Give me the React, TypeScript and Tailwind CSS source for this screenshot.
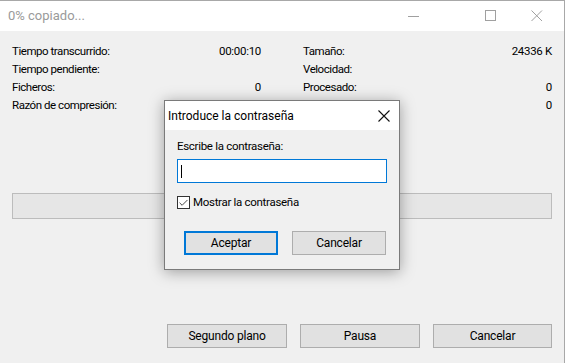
import { Check } from "lucide-react";

const font = { fontFamily: "Roboto, 'Liberation Sans', sans-serif" };

function StatRow({ label, value }: { label: string; value?: string }) {
  return (
    <div className="flex h-[18px] items-center justify-between">
      <span className="tracking-[-0.45px]">{label}</span>
      <span className="tracking-[-0.3px]">{value}</span>
    </div>
  );
}

function WinButton({ label, w = "w-[120px]", focus = false }: { label: string; w?: string; focus?: boolean }) {
  return (
    <button
      className={
        "flex h-[24px] items-center justify-center bg-[#e1e1e1] text-[12px] tracking-[-0.2px] text-black " +
        w +
        (focus ? " border-2 border-[#0078d7]" : " border border-[#adadad]")
      }
    >
      {label}
    </button>
  );
}

export default function App() {
  return (
    <div className="relative h-[363px] w-[567px] overflow-hidden bg-white" style={font}>
      {/* main copy window */}
      <div className="flex h-full w-[565px] flex-col border-r border-t border-[#a8a8a8] bg-[#f0f0f0]">
        <div className="flex h-[30px] items-center justify-between bg-white">
          <span className="pl-[8px] text-[13px] text-[#9a9a9a]">0% copiado...</span>
          <div className="flex h-full items-center pr-[4px]">
            <div className="mr-[31px] flex h-full w-[46px] items-center justify-center">
              <svg width="12" height="12" viewBox="0 0 12 12">
                <line x1="0" y1="6.5" x2="11" y2="6.5" stroke="#a0a0a0" strokeWidth="1" />
              </svg>
            </div>
            <div className="flex h-full w-[46px] items-center justify-center">
              <svg width="12" height="12" viewBox="0 0 12 12">
                <rect x="0.5" y="0.5" width="10" height="10" fill="none" stroke="#a0a0a0" strokeWidth="1" />
              </svg>
            </div>
            <div className="flex h-full w-[46px] items-center justify-center">
              <svg width="12" height="12" viewBox="0 0 12 12">
                <path d="M0.5 0.5 L11 11 M11 0.5 L0.5 11" stroke="#a0a0a0" strokeWidth="1" />
              </svg>
            </div>
          </div>
        </div>

        <div className="flex flex-1 flex-col px-[12px] pt-[12px] text-[11.5px] text-black">
          <div className="grid grid-cols-2 gap-x-[42px]">
            <div className="flex flex-col">
              <StatRow label="Tiempo transcurrido:" value="00:00:10" />
              <StatRow label="Tiempo pendiente:" />
              <StatRow label="Ficheros:" value="0" />
              <StatRow label="Razón de compresión:" />
            </div>
            <div className="flex flex-col">
              <StatRow label="Tamaño:" value="24336 K" />
              <StatRow label="Velocidad:" />
              <StatRow label="Procesado:" value="0" />
              <StatRow label="Errores:" value="0" />
            </div>
          </div>

          <div className="mt-[78px] h-[26px] w-full border border-[#bcbcbc] bg-[#e6e6e6]" />

          <div className="mt-[105px] flex justify-end gap-[13px]">
            <WinButton label="Segundo plano" />
            <WinButton label="Pausa" />
            <WinButton label="Cancelar" w="w-[119px]" />
          </div>
        </div>
      </div>

      {/* password dialog */}
      <div className="absolute left-[164px] top-[100px] flex h-[170px] w-[236px] flex-col border border-[#7a7a7a] bg-[#f0f0f0] shadow-[0_2px_14px_rgba(0,0,0,0.35)]">
        <div className="flex h-[29px] items-center justify-between bg-white pl-[3px] pr-[9px]">
          <span className="text-[12px] text-black">Introduce la contraseña</span>
          <svg width="12" height="12" viewBox="0 0 12 12">
            <path d="M0.5 0.5 L11.5 11.5 M11.5 0.5 L0.5 11.5" stroke="#111" strokeWidth="1.1" />
          </svg>
        </div>
        <div className="flex flex-col px-[12px] pt-[9px] text-[11.5px] text-black">
          <span className="h-[14px] leading-[14px] tracking-[-0.3px]">Escribe la contraseña:</span>
          <div className="mt-[6px] flex h-[24px] w-[210px] items-center border border-[#0078d7] bg-white pl-[3px]">
            <div className="h-[13px] w-px bg-black" />
          </div>
          <label className="mt-[11px] flex items-center gap-[3px]">
            <span className="flex h-[13px] w-[13px] items-center justify-center border border-[#333] bg-white">
              <Check size={12} strokeWidth={1.8} color="#222" />
            </span>
            <span className="tracking-[-0.3px]">Mostrar la contraseña</span>
          </label>
          <div className="mt-[20px] flex gap-[14px] pl-[7px]">
            <WinButton label="Aceptar" w="w-[94px]" focus />
            <WinButton label="Cancelar" w="w-[94px]" />
          </div>
        </div>
      </div>
    </div>
  );
}
